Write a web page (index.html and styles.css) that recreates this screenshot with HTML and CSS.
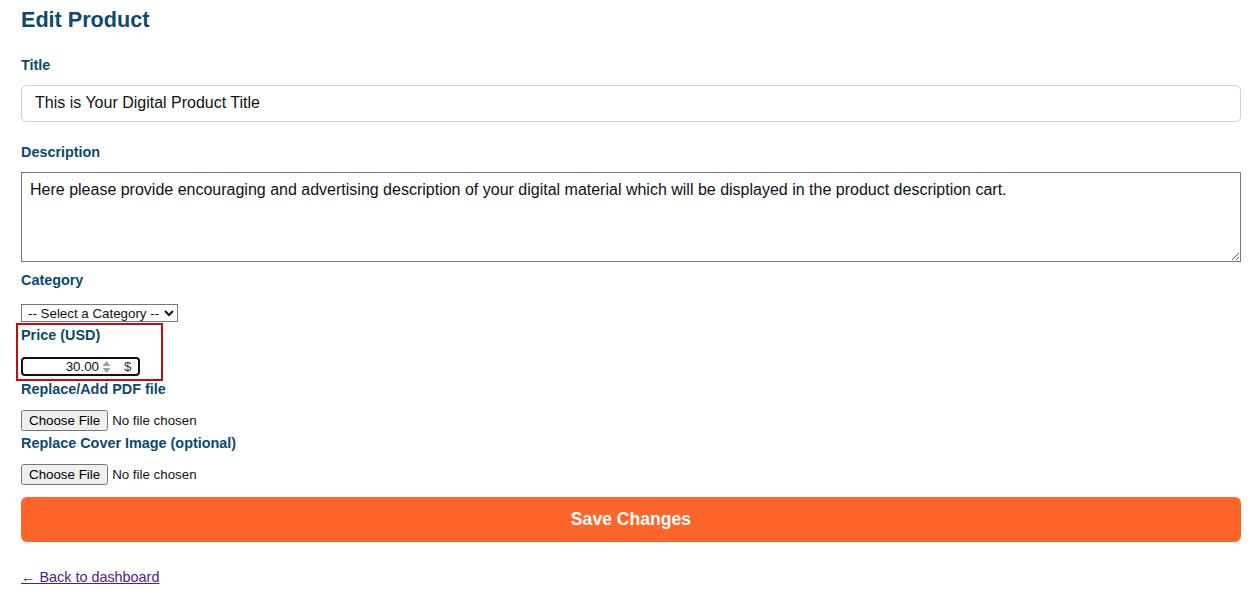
FILE: index.html
```html
<!DOCTYPE html>
<html lang="en">
<head>
<meta charset="utf-8">
<title>Edit Product</title>
<link rel="stylesheet" href="styles.css">
</head>
<body>
<div class="page">
  <h1 class="page-title">Edit Product</h1>
  <form class="product-form">
    <label class="field-label label-title" for="title">Title</label>
    <input class="text-input" id="title" type="text" value="This is Your Digital Product Title">

    <label class="field-label label-desc" for="desc">Description</label>
    <textarea class="text-area" id="desc">Here please provide encouraging and advertising description of your digital material which will be displayed in the product description cart.</textarea>

    <label class="field-label label-cat" for="cat">Category</label>
    <div class="select-row">
      <select class="category-select" id="cat">
        <option>-- Select a Category --</option>
      </select>
    </div>

    <div class="highlight">
      <label class="field-label label-price" for="price">Price (USD)</label>
      <div class="price-box">
        <input class="price-input" id="price" type="number" value="30.00" step="0.01">
        <svg class="spinner" width="9" height="14" viewBox="0 0 9 14" aria-hidden="true">
          <path d="M0.5 6 L4.5 1 L8.5 6 Z" fill="#a0a0a0"/>
          <path d="M0.5 8 L4.5 13 L8.5 8 Z" fill="#a0a0a0"/>
        </svg>
        <span class="currency">$</span>
      </div>
    </div>

    <label class="field-label label-file" for="pdf">Replace/Add PDF file</label>
    <div class="file-row"><input class="file-input" id="pdf" type="file"></div>

    <label class="field-label label-file" for="cover">Replace Cover Image (optional)</label>
    <div class="file-row"><input class="file-input" id="cover" type="file"></div>

    <button class="save-btn" type="button">Save Changes</button>
  </form>
  <a class="back-link" href="#">← Back to dashboard</a>
</div>
</body>
</html>
```

FILE: styles.css
```css
html, body {
  margin: 0;
  padding: 0;
  background: #ffffff;
}

body {
  font-family: "Liberation Sans", Arial, sans-serif;
  color: #111;
}

.page {
  padding: 6px 17px 20px 21px;
}

.page-title {
  margin: 0;
  font-size: 21.6px;
  line-height: 27px;
  font-weight: 700;
  color: #0b4a6e;
}

.product-form {
  display: flex;
  flex-direction: column;
  align-items: flex-start;
}

.field-label {
  display: block;
  font-size: 14.4px;
  line-height: 16px;
  font-weight: 700;
  color: #0b4a6e;
}

.label-title { margin: 24px 0 12px; }
.label-desc { margin: 22px 0 12px; }
.label-cat { margin: 10px 0 16px; }
.label-price { margin: 0 0 14px; }
.label-file { margin: 0 0 13px; }

.text-input {
  box-sizing: border-box;
  width: 100%;
  height: 37px;
  margin: 0;
  padding: 8px 13px 10px;
  border: 1px solid #cfcfcf;
  border-radius: 5px;
  font-family: "Liberation Sans", Arial, sans-serif;
  font-size: 16px;
  color: #111;
  outline: none;
}

.text-area {
  box-sizing: border-box;
  display: block;
  width: 100%;
  height: 90px;
  margin: 0;
  padding: 8px;
  border: 1px solid #767676;
  border-radius: 0;
  font-family: "Liberation Sans", Arial, sans-serif;
  font-size: 16px;
  line-height: 18px;
  color: #111;
  resize: vertical;
}

.select-row {
  display: flex;
  height: 18px;
}

.category-select {
  box-sizing: border-box;
  width: 157px;
  height: 18px;
  margin: 0;
  padding: 0 0 0 2px;
  font-family: "Liberation Sans", Arial, sans-serif;
  font-size: 13.33px;
  color: #111;
  border: 1px solid #767676;
  border-radius: 0;
  background: #fff;
}

.highlight {
  box-sizing: border-box;
  width: 147px;
  margin: 1px 0 0 -5px;
  padding: 2px 3px 3px 3px;
  border: 2px solid #c40c0c;
}

.price-box {
  box-sizing: border-box;
  display: flex;
  align-items: center;
  width: 119px;
  height: 19px;
  border: 2px solid #111;
  border-radius: 4px;
  background: #fff;
}

.price-input {
  box-sizing: border-box;
  width: 77px;
  height: 15px;
  margin: 0;
  padding: 0 1px 0 0;
  border: none;
  outline: none;
  background: transparent;
  text-align: right;
  font-family: "Liberation Sans", Arial, sans-serif;
  font-size: 13.33px;
  color: #111;
  -moz-appearance: textfield;
}

.price-input::-webkit-outer-spin-button,
.price-input::-webkit-inner-spin-button {
  -webkit-appearance: none;
  margin: 0;
}

.spinner {
  flex: none;
  margin-left: 2px;
}

.currency {
  margin-left: 13px;
  font-size: 13.33px;
  line-height: 15px;
  color: #333;
}

.file-row {
  display: flex;
  height: 21px;
  margin-bottom: 4px;
}

.file-input {
  margin: 0;
  font-family: "Liberation Sans", Arial, sans-serif;
  font-size: 13.33px;
  color: #111;
}

.save-btn {
  box-sizing: border-box;
  width: 100%;
  height: 45px;
  margin: 8px 0 0;
  border: none;
  border-radius: 6px;
  background: #ff6529;
  color: #fff;
  font-family: "Liberation Sans", Arial, sans-serif;
  font-size: 17.6px;
  font-weight: 700;
  cursor: pointer;
}

.back-link {
  display: inline-block;
  margin-top: 27px;
  font-size: 14.4px;
  line-height: 16px;
  color: #551a8b;
  text-decoration: underline;
}
```
